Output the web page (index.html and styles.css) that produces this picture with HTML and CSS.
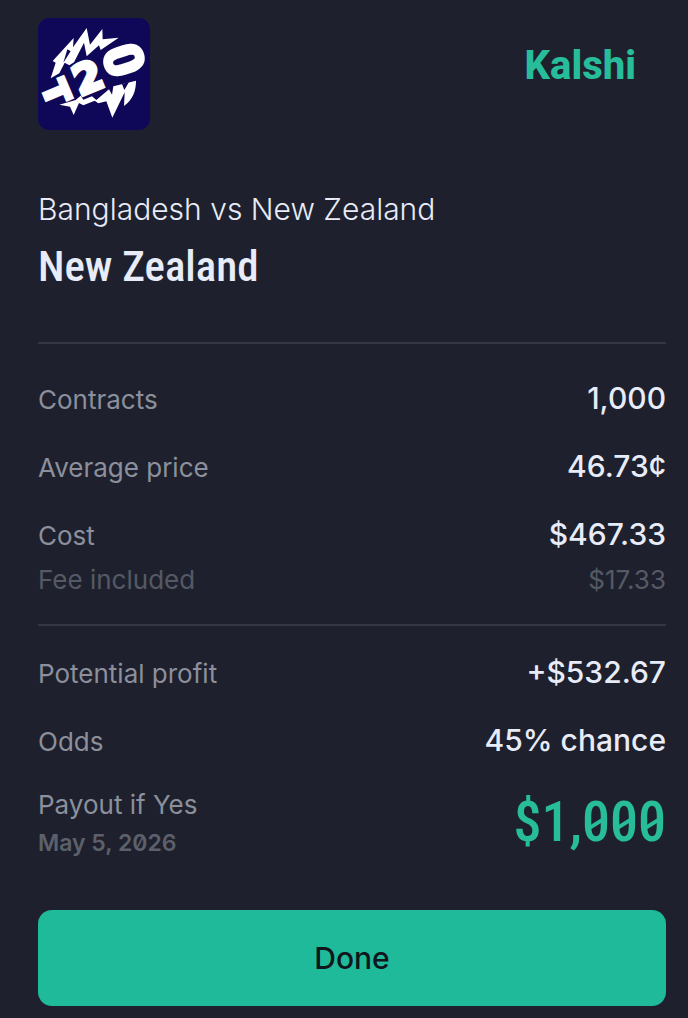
FILE: index.html
```html
<!DOCTYPE html>
<html lang="en">
<head>
    <meta charset="UTF-8">
    <meta name="viewport" content="width=device-width, initial-scale=1.0">
    <title>Kalshi - New Zealand</title>
    <link rel="stylesheet" href="styles.css">
</head>
<body>
    <main class="ticket">
        <header class="top">
            <svg class="event-icon" viewBox="24 24 336 336" role="img" aria-label="T20">
                <rect x="24" y="24" width="336" height="336" rx="34" fill="#0f0757"/>
                <g fill="#fff">
                    <!-- burst above and below the lettering -->
                    <path d="M62 205 L77 158 L68 153 L131 84 L129 112 L170 54 L180 104 L217 57 L218 88 L266 83 L212 120 L207 106 L170 139 L162 98 L132 157 L118 166 L104 158 L88 190 Z"/>
                    <path d="M88 284 L137 270 L152 257 L160 269 L186 259 L199 270 L237 238 L246 254 L250 229 L318 212 C318 243 309 267 282 288 L284 247 L247 323 L229 274 L205 280 L194 272 L160 286 L147 279 L131 315 L120 290 Z"/>
                </g>
                <!-- dark gaps cut into the burst -->
                <path d="M112 118 L100 158 L122 124 Z M283 240 L297 216 L276 222 Z" fill="#0f0757"/>
                <g class="event-letters">
                    <text class="letter-t" transform="translate(46 260) rotate(67)">T</text>
                    <text class="letter-2" transform="translate(189 242) rotate(-22)">2</text>
                    <text class="letter-0" transform="translate(229 167) rotate(72)">0</text>
                </g>
            </svg>
            <span class="brand">Kalshi</span>
        </header>

        <p class="event">Bangladesh vs New Zealand</p>
        <h1 class="pick">New Zealand</h1>

        <dl class="rows order">
            <div class="row"><dt>Contracts</dt><dd>1,000</dd></div>
            <div class="row"><dt>Average price</dt><dd>46.73¢</dd></div>
            <div class="row"><dt>Cost</dt><dd>$467.33</dd></div>
            <div class="row fee"><dt>Fee included</dt><dd>$17.33</dd></div>
        </dl>

        <dl class="rows result">
            <div class="row"><dt>Potential profit</dt><dd>+$532.67</dd></div>
            <div class="row"><dt>Odds</dt><dd>45% chance</dd></div>
            <div class="row payout">
                <dt>Payout if Yes <span class="date">May 5, 2026</span></dt>
                <dd>$1,<span class="zero">0</span><span class="zero">0</span><span class="zero">0</span></dd>
            </div>
        </dl>

        <button class="done" type="button">Done</button>
    </main>
</body>
</html>
```
FILE: styles.css
```css
* { box-sizing: border-box; margin: 0; padding: 0; }

body { background-color: #1e212d; color: #e8ebf8; font-family: Inter, "Liberation Sans", sans-serif; }

.ticket { padding: 18px 22px 12px 38px; }

.top { display: flex; justify-content: space-between; align-items: flex-start; padding-right: 30px; }
.event-icon { display: block; width: 112px; height: 112px; }
.brand { margin-top: 22px; color: #28bd9a; font-family: Roboto, "Liberation Sans", sans-serif; font-size: 40px; font-weight: 800; line-height: 52px; }

.event-letters { fill: #fff; stroke: #fff; font-family: "DejaVu Sans", sans-serif; font-weight: 700; text-anchor: middle; }
.letter-t { font-size: 98px; stroke-width: 12px; }
.letter-2 { font-size: 122px; stroke-width: 12px; }
.letter-0 { font-family: Roboto, sans-serif; font-size: 156px; font-weight: 700; stroke-width: 12px; stroke-linejoin: round; }

.event { margin-top: 60px; font-size: 30px; font-weight: 300; line-height: 38px; }
.pick { margin-top: 10px; font-family: "Roboto Condensed", "Noto Sans CJK SC", sans-serif; font-size: 43px; font-weight: 500; line-height: 56px; }

/* order details */
.rows { border-top: 2px solid #343844; }
.order { margin-top: 48px; padding: 36px 0 24px; }
.result { padding: 28px 0 48px; }
.row { display: flex; justify-content: space-between; align-items: center; margin-bottom: 28px; line-height: 40px; }
.row dt { color: #8c8f9c; font-size: 26px; font-weight: 400; }
.row dd { font-size: 30px; font-weight: 500; line-height: 36px; padding-bottom: 4px; }

.row.fee { margin: -24px 0 0; }
.row.fee dt, .row.fee dd { color: #555964; font-size: 26px; font-weight: 400; line-height: 40px; padding: 0; }

.row.payout { margin: -4px 0 0; }
.row.payout dt { line-height: 38px; }
.row.payout dd { color: #28bd9a; font-family: "Roboto Condensed", "Noto Sans CJK SC", sans-serif; font-size: 56px; font-weight: 500; line-height: 64px; }
.row .date { display: block; color: #5c606b; font-size: 23px; font-weight: 600; font-feature-settings: "zero"; }

/* slash across the zeros of the payout */
.zero { position: relative; display: inline-block; }
.zero::after { content: ""; position: absolute; top: 50%; left: 22%; width: 56%; height: 4px; background-color: #28bd9a; transform: rotate(-32deg); }

.done { display: block; width: 100%; height: 96px; border: 0; border-radius: 14px; background-color: #1fba99; color: #11151c; font: 500 30px/40px Inter, sans-serif; }
```
